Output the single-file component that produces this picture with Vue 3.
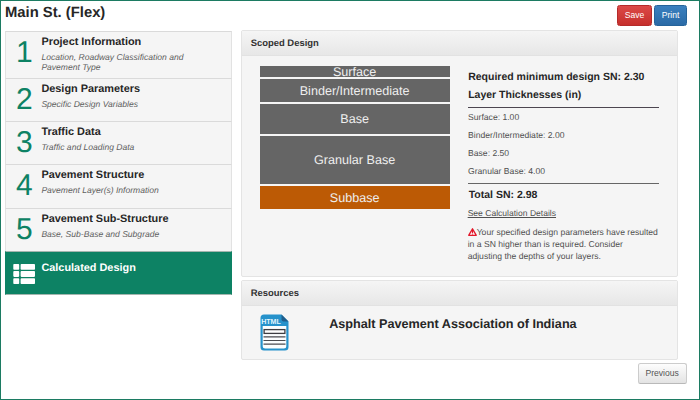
<script setup>
const steps = [
  { n: 1, title: 'Project Information', sub: 'Location, Roadway Classification and Pavement Type', h: 47 },
  { n: 2, title: 'Design Parameters', sub: 'Specific Design Variables', h: 43 },
  { n: 3, title: 'Traffic Data', sub: 'Traffic and Loading Data', h: 43 },
  { n: 4, title: 'Pavement Structure', sub: 'Pavement Layer(s) Information', h: 44 },
  { n: 5, title: 'Pavement Sub-Structure', sub: 'Base, Sub-Base and Subgrade', h: 43 },
]
const layers = [
  { name: 'Surface', h: 11 },
  { name: 'Binder/Intermediate', h: 23 },
  { name: 'Base', h: 30 },
  { name: 'Granular Base', h: 48 },
  { name: 'Subbase', h: 23, sub: true },
]
const thicknesses = ['Surface: 1.00', 'Binder/Intermediate: 2.00', 'Base: 2.50', 'Granular Base: 4.00']
</script>

<template>
  <div class="page">
    <header class="top">
      <h1>Main St. (Flex)</h1>
      <div class="actions">
        <button class="btn save">Save</button>
        <button class="btn print">Print</button>
      </div>
    </header>
    <div class="columns">
      <nav class="steps">
        <div v-for="s in steps" :key="s.n" class="step" :style="{ height: s.h + 'px' }">
          <div class="num">{{ s.n }}</div>
          <div class="step-text">
            <div class="step-title">{{ s.title }}</div>
            <div class="step-sub">{{ s.sub }}</div>
          </div>
        </div>
        <div class="step active">
          <div class="list-icon">
            <svg width="22" height="20" viewBox="0 0 22 20" fill="#fff">
              <rect x=".3" y="0" width="5.9" height="5.8" rx=".8" /><rect x="7.6" y="0" width="14.4" height="5.8" rx=".8" />
              <rect x=".3" y="7.1" width="5.9" height="5.8" rx=".8" /><rect x="7.6" y="7.1" width="14.4" height="5.8" rx=".8" />
              <rect x=".3" y="14.2" width="5.9" height="5.8" rx=".8" /><rect x="7.6" y="14.2" width="14.4" height="5.8" rx=".8" />
            </svg>
          </div>
          <div class="step-text"><div class="step-title">Calculated Design</div></div>
        </div>
      </nav>
      <main class="main">
        <section class="panel design">
          <h2>Scoped Design</h2>
          <div class="design-body">
            <div class="layers">
              <div v-for="l in layers" :key="l.name" class="layer" :class="{ subbase: l.sub }" :style="{ height: l.h + 'px' }">
                <span>{{ l.name }}</span>
              </div>
            </div>
            <div class="info">
              <h3>Required minimum design SN: 2.30</h3>
              <h3>Layer Thicknesses (in)</h3>
              <div class="rows">
                <div v-for="t in thicknesses" :key="t" class="row">{{ t }}</div>
              </div>
              <h3 class="total">Total SN: 2.98</h3>
              <div class="link"><a>See Calculation Details</a></div>
              <p class="warn">
                <svg class="warn-icon" width="9" height="8" viewBox="0 0 9 8">
                  <path d="M4.5 .8 8.3 7.3H.7Z" fill="#fbeeee" stroke="#e3172a" stroke-width="1.3" stroke-linejoin="round" />
                  <path d="M4.5 3v2M4.5 5.6v.9" stroke="#e3172a" stroke-width="1" />
                </svg>Your specified design parameters have resulted<br />in a SN higher than is required. Consider<br />adjusting the depths of your layers.
              </p>
            </div>
          </div>
        </section>
        <section class="panel resources">
          <h2>Resources</h2>
          <div class="resource">
            <svg width="29" height="37" viewBox="0 0 29 37">
              <path d="M4 .5H21.5L28.5 7.5V33a3.5 3.5 0 0 1-3.5 3.5H4A3.5 3.5 0 0 1 .5 33V4A3.5 3.5 0 0 1 4 .5Z" fill="#2692cb" />
              <path d="M2.7 12H26.3V32a2.5 2.5 0 0 1-2.5 2.5H5.2A2.5 2.5 0 0 1 2.7 32Z" fill="#fbfdfe" />
              <path d="M21.5 .5 28.5 7.5H23.5a2 2 0 0 1-2-2Z" fill="#205e8c" />
              <text x="1.2" y="10" class="html-label" textLength="19.6" lengthAdjust="spacingAndGlyphs">HTML</text>
              <rect x="4.1" y="15.6" width="20.8" height="3.8" fill="#fff" stroke="#3d3d42" stroke-width="1.3" />
              <path d="M3.5 22.8H25.5M3.5 26.5H25.5M3.5 30.2H25.5" stroke="#4b4b50" stroke-width="1.2" />
            </svg>
            <div class="resource-title">Asphalt Pavement Association of Indiana</div>
          </div>
        </section>
        <div class="foot"><button class="btn previous">Previous</button></div>
      </main>
    </div>
  </div>
</template>

<style>
body {
  margin: 0;
  background: #fff;
}
</style>

<style scoped>
* {
  box-sizing: border-box;
}
.page {
  width: 700px;
  height: 400px;
  border: 1px solid #1c7b62;
  padding: 0 12px 0 4px;
  overflow: hidden;
  font-family: 'Liberation Sans', Arial, sans-serif;
  font-size: 8.6px;
  color: #505050;
  text-rendering: geometricPrecision;
}
h1, h2, h3, p {
  margin: 0;
}
.top {
  display: flex;
  justify-content: space-between;
  height: 29px;
}
h1 {
  font-size: 14.8px;
  line-height: 17px;
  padding-top: 4px;
  color: #262626;
}
.actions {
  display: flex;
  gap: 2px;
  padding-top: 4px;
}
.btn {
  display: block;
  height: 21px;
  padding: 0;
  border-radius: 2.5px;
  font: 8.6px/19px 'Liberation Sans', Arial, sans-serif;
  text-align: center;
}
.save {
  width: 35px;
  color: #fff;
  border: 1px solid #b52b2a;
  background: linear-gradient(#dc4a47, #c62f2c);
}
.print {
  width: 33px;
  color: #fff;
  border: 1px solid #25639a;
  background: linear-gradient(#3a80bf, #2a6aa6);
}
.previous {
  width: 49px;
  color: #555;
  border: 1px solid #ccc;
  border-bottom-color: #b9b9b9;
  background: linear-gradient(#fdfdfd, #e3e3e3);
}
.columns {
  display: flex;
  gap: 9px;
}
.steps {
  width: 227px;
  padding-top: 1px;
}
.step {
  display: flex;
  background: #f5f5f5;
  border: 1px solid #e2e2e2;
  border-top: 1px solid #dadada;
  border-bottom: 0;
}
.num {
  width: 35px;
  padding: 6px 0 0 10px;
  font-size: 30px;
  line-height: 30px;
  color: #0d8264;
}
.step-title {
  font-size: 10.9px;
  font-weight: bold;
  line-height: 13px;
  padding: 4px 0 0 .4px;
  color: #262626;
}
.step-sub {
  width: 150px;
  padding: 4.4px 0 0 .4px;
  font-style: italic;
  font-size: 8.55px;
  line-height: 9.6px;
  color: #606060;
}
.active {
  height: 44px;
  background: #0d8264;
  border-color: #0d8264;
  border-top-color: #a3b5ae;
  border-bottom: 1px solid #a3b5ae;
}
.active .step-title {
  color: #fff;
  padding-top: 10px;
}
.list-icon {
  width: 35px;
  padding: 12px 0 0 7px;
}
.list-icon svg, .resource svg {
  display: block;
}
.main {
  width: 447px;
}
.panel {
  width: 437px;
  background: #f5f5f5;
  border: 1px solid #e4e4e4;
  border-radius: 2px;
}
.panel h2 {
  height: 25px;
  padding-left: 9px;
  font-size: 9.45px;
  line-height: 25px;
  color: #333;
  background: linear-gradient(#f5f5f5, #e7e7e7);
  border-bottom: 1px solid #e2e2e2;
}
.design {
  height: 247px;
}
.design-body {
  display: flex;
  gap: 18px;
  padding: 10px 0 0 18px;
}
.layers {
  display: flex;
  flex-direction: column;
  gap: 2px;
  width: 190px;
}
.layer {
  display: flex;
  align-items: center;
  justify-content: center;
  background: #656565;
  color: #eee;
  font-size: 12.6px;
  line-height: 12px;
}
.subbase {
  background: #bc5a05;
}
.info {
  width: 191px;
}
h3 {
  padding-left: .5px;
  font-size: 10.5px;
  line-height: 18px;
  color: #262626;
}
.info > h3:first-child {
  padding-top: 2px;
}
.rows {
  margin-top: 3px;
  padding-bottom: 3px;
  border-top: 1px solid #4c4650;
  border-bottom: 1px solid #666;
}
.row {
  height: 18px;
  line-height: 19px;
  padding-left: .4px;
}
.rows + .total {
  padding-left: 1px;
  line-height: 23px;
}
.link {
  line-height: 13px;
  font-size: 8.55px;
}
.link a {
  text-decoration: underline;
}
.warn {
  padding-top: 6px;
  line-height: 12px;
  white-space: nowrap;
}
.warn-icon {
  vertical-align: -1px;
}
.resources {
  height: 80px;
  margin-top: 3px;
}
.resource {
  display: flex;
  padding: 8px 0 0 18px;
}
.resource-title {
  padding: 3px 0 0 40.5px;
  font-size: 12.65px;
  font-weight: bold;
  line-height: 15px;
  color: #262626;
}
.html-label {
  font: bold 7.4px 'Liberation Sans', Arial, sans-serif;
  fill: #e4f5fd;
}
.foot {
  display: flex;
  justify-content: flex-end;
  padding-top: 3px;
  width: 446px;
}
</style>
